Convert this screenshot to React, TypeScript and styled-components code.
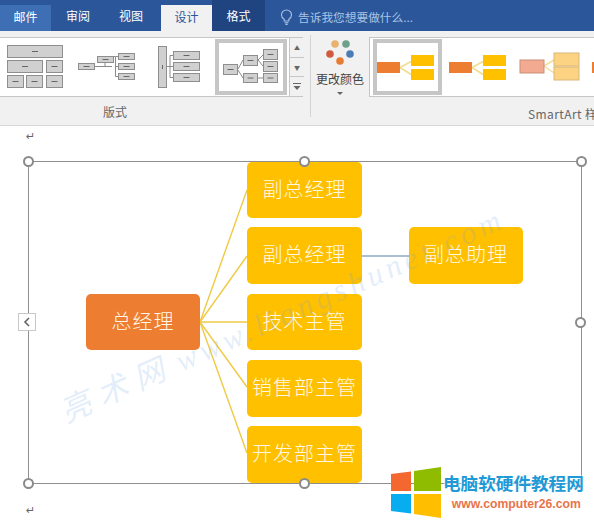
import type { ReactNode } from "react";
import { createGlobalStyle, styled } from "styled-components";

const GlobalStyle = createGlobalStyle`
  html, body {
    margin: 0;
    padding: 0;
    background: #fff;
    overflow: hidden;
  }
  body {
    font-family: "Noto Sans CJK SC", "Liberation Sans", sans-serif;
  }
`;

// the document area starts under the ribbon, diagram numbers below are page coordinates
const DOC_TOP = 126;

const tabs = [
  { label: "邮件", width: 51, kind: "hover" },
  { label: "审阅", width: 54, kind: "plain" },
  { label: "视图", width: 56, kind: "plain" },
  { label: "设计", width: 51, kind: "active" },
  { label: "格式", width: 53, kind: "dark" },
];

const leaves = [
  { label: "副总经理", y: 162, h: 56 },
  { label: "副总经理", y: 227, h: 57 },
  { label: "技术主管", y: 294, h: 56 },
  { label: "销售部主管", y: 360, h: 57 },
  { label: "开发部主管", y: 426, h: 57 },
];

const handles = [
  [28, 161],
  [304, 161],
  [581, 161],
  [580, 322],
  [28, 483],
  [304, 483],
];

const branchEnds = [190, 256, 322, 387, 453];

export default function App() {
  return (
    <Page>
      <GlobalStyle />
      <TabBar>
        {tabs.map((tab) => (
          <Tab key={tab.label} $width={tab.width} $kind={tab.kind}>
            {tab.label}
          </Tab>
        ))}
        <Search>
          <svg width="13" height="18" viewBox="0 0 14 18" fill="none" stroke="#a9c3e6" strokeWidth="1.2">
            <path d="M4.5 11.5C2.8 10.4 1.6 8.800 1.6 6.8a5.4 5.4 0 0 1 10.8 0c0 2-1.2 3.600-2.900 4.700v1.800h-5z" />
            <path d="M5 15.2h4M5.800 17h2.400" />
          </svg>
          <SearchText>告诉我您想要做什么...</SearchText>
        </Search>
      </TabBar>

      <Ribbon>
        <LayoutGroup>
          <Gallery>
            <Thumb x={0} w={70}>
              <Box x={7} y={45} w={56} h={13} />
              <Box x={7} y={60} w={36} h={13} />
              <Box x={46} y={60} w={17} h={13} />
              <Box x={7} y={75} w={17} h={13} />
              <Box x={26} y={75} w={17} h={13} />
              <Box x={46} y={75} w={17} h={13} />
            </Thumb>
            <Thumb x={70} w={75}>
              <path d="M95 66.500h17M105 63v4M114 56.500h1M118 56.500h-2.500v20h2.500M115.500 66.500h2.500" stroke="#8a8a8a" fill="none" />
              <Box x={78} y={63} w={17} h={7} />
              <Box x={97} y={56} w={17} h={7} />
              <Box x={118} y={53} w={17} h={7} />
              <Box x={118} y={63} w={17} h={7} />
              <Box x={118} y={73} w={17} h={7} />
            </Thumb>
            <Thumb x={145} w={70}>
              <path d="M167 66.500h3M170 55.500v22M170 55.500h3M170 66.500h3M170 77.500h3" stroke="#8a8a8a" fill="none" />
              <Box x={158} y={46} w={9} h={42} />
              <Box x={173} y={51} w={27} h={9} />
              <Box x={173} y={62} w={27} h={9} />
              <Box x={173} y={73} w={27} h={9} />
            </Thumb>
            <SelectedThumb $width={72}>
              <Thumb x={219} w={64} y={43} h={48}>
                <path d="M238 69l5-9M238 70l5 8M258 60l5-5M258 60l5 6M258 78h5" stroke="#8a8a8a" fill="none" />
                <Box x={223} y={64} w={15} h={11} />
                <Box x={243} y={55} w={15} h={11} />
                <Box x={243} y={73} w={15} h={10} />
                <Box x={263} y={49} w={15} h={11} />
                <Box x={263} y={61} w={15} h={11} />
                <Box x={263} y={73} w={15} h={10} />
              </Thumb>
            </SelectedThumb>
            <Spinner>
              <SpinButton>▲</SpinButton>
              <SpinButton>▼</SpinButton>
              <SpinButton>
                <svg width="8" height="7" viewBox="0 0 8 7" fill="#666">
                  <rect width="8" height="1" />
                  <path d="M0.500 3h7L4 7z" />
                </svg>
              </SpinButton>
            </Spinner>
          </Gallery>
          <GroupLabel>版式</GroupLabel>
        </LayoutGroup>

        <GroupDivider />

        <StyleGroup>
          <StyleRow>
            <ColorButton>
              <svg width="32" height="28" viewBox="0 0 32 28">
                <circle cx="11" cy="5" r="3.800" fill="#e9b36f" />
                <circle cx="22" cy="5" r="3.800" fill="#6fa08c" />
                <circle cx="6" cy="15" r="3.800" fill="#cf5a3d" />
                <circle cx="26" cy="15" r="3.800" fill="#4a7db5" />
                <circle cx="16" cy="22" r="3.800" fill="#e77c33" />
              </svg>
              <ColorLabel>更改颜色</ColorLabel>
              <Caret />
            </ColorButton>
            <ColorGallery>
              <SelectedThumb $width={69}>
                <Thumb x={377} w={61} y={43} h={48}>
                  <ColorSet />
                </Thumb>
              </SelectedThumb>
              <Thumb x={442} w={74}>
                <ColorSet dx={72} />
              </Thumb>
              <Thumb x={516} w={68}>
                <path d="M544 66l10-6M544 66l10 7" stroke="#f6dc9a" fill="none" strokeWidth="1.500" />
                <rect x={520} y={60} width={24} height={13} fill="#f2ab90" stroke="#c98d78" />
                <rect x={554} y={53} width={25} height={13} fill="#fcd283" stroke="#d9b876" />
                <rect x={554} y={67} width={25} height={13} fill="#fcd283" stroke="#d9b876" />
              </Thumb>
              <Thumb x={584} w={10}>
                <rect x={592} y={62} width={10} height={11} fill="#ed7d31" />
              </Thumb>
            </ColorGallery>
          </StyleRow>
          <StyleLabel>SmartArt 样</StyleLabel>
        </StyleGroup>
      </Ribbon>

      <Document>
        <ReturnMark $y={131}>↵</ReturnMark>
        <ReturnMark $y={505}>↵</ReturnMark>

        <Frame />
        <Connectors viewBox={`0 ${DOC_TOP} 594 397`}>
          {branchEnds.map((end) => (
            <line key={end} x1="200" y1="322" x2="247" y2={end} stroke="#efca45" strokeWidth="1.400" />
          ))}
          <line x1="362" y1="256" x2="409" y2="256" stroke="#8fa8c6" strokeWidth="1.400" />
        </Connectors>

        <Node $x={86} $y={294} $w={114} $h={56} $root>
          总经理
        </Node>
        {leaves.map((leaf, i) => (
          <Node key={i} $x={247} $y={leaf.y} $w={115} $h={leaf.h}>
            {leaf.label}
          </Node>
        ))}
        <Node $x={409} $y={227} $w={114} $h={57}>
          副总助理
        </Node>

        {handles.map(([x, y]) => (
          <Handle key={`${x}-${y}`} $x={x} $y={y} />
        ))}
        <CollapseTab>
          <svg width="8" height="10" viewBox="0 0 8 10" fill="none" stroke="#666" strokeWidth="1.600">
            <path d="M6 1L2 5l4 4" />
          </svg>
        </CollapseTab>

        <Watermark>
          <WatermarkName>亮术网</WatermarkName>www.liangshunet.com
        </Watermark>

        <Badge>
          <svg width="52" height="52" viewBox="0 0 52 52">
            <path d="M1 8l20-2.500v19.500H1z" fill="#f4682f" />
            <path d="M24 5L51 1v24H24z" fill="#8fbc00" />
            <path d="M1 28h20v19.500L1 45z" fill="#08adf0" />
            <path d="M24 28h27v24l-27-4z" fill="#ffbe00" />
          </svg>
          <BadgeText>
            <BadgeTitle>电脑软硬件教程网</BadgeTitle>
            <BadgeUrl>www.computer26.com</BadgeUrl>
          </BadgeText>
        </Badge>
      </Document>
    </Page>
  );
}

function Thumb({
  x,
  w,
  y = 38,
  h = 58,
  children,
}: {
  x: number;
  w: number;
  y?: number;
  h?: number;
  children: ReactNode;
}) {
  return (
    <ThumbSvg width={w} height={h} viewBox={`${x} ${y} ${w} ${h}`}>
      {children}
    </ThumbSvg>
  );
}

function Box({ x, y, w, h }: { x: number; y: number; w: number; h: number }) {
  const midX = x + w / 2;
  const midY = y + h / 2;
  const tall = h > w;
  return (
    <>
      <rect x={x + 0.5} y={y + 0.5} width={w - 1} height={h - 1} fill="#d0d0d0" stroke="#8e8e8e" />
      {tall ? (
        <line x1={midX} y1={midY - 2} x2={midX} y2={midY + 2} stroke="#666" />
      ) : (
        <line x1={midX - 3} y1={midY} x2={midX + 3} y2={midY} stroke="#666" />
      )}
    </>
  );
}

function ColorSet({ dx = 0 }: { dx?: number }) {
  return (
    <>
      <path
        d={`M${400 + dx} 67.500l11-6M${400 + dx} 67.500l11 7`}
        stroke="#f4dc8a"
        fill="none"
        strokeWidth="1.500"
      />
      <rect x={377 + dx} y={62} width={23} height={11} fill="#ed7d31" />
      <rect x={411 + dx} y={55} width={23} height={11} fill="#ffc000" />
      <rect x={411 + dx} y={69} width={23} height={11} fill="#ffc000" />
    </>
  );
}

const Page = styled.div`
  width: 594px;
  height: 523px;
  display: flex;
  flex-direction: column;
  overflow: hidden;
`;

const ThumbSvg = styled.svg`
  flex: none;
  display: block;
`;

const TabBar = styled.div`
  height: 31px;
  flex: none;
  display: flex;
  background: #2b579a;
`;

const tabColors: Record<string, string> = {
  hover: "#3e6fb5",
  plain: "#2b579a",
  active: "#f1f1f1",
  dark: "#1f4480",
};

const Tab = styled.div<{ $width: number; $kind: string }>`
  width: ${(p) => p.$width}px;
  display: flex;
  align-items: center;
  justify-content: center;
  padding-right: ${(p) => (p.$width === 56 ? 4 : 0)}px;
  box-sizing: border-box;
  font-size: 12px;
  color: ${(p) => (p.$kind === "active" ? "#2b579a" : "#fff")};
  background: ${(p) => tabColors[p.$kind]};
  border-top: ${(p) => (p.$kind === "active" || p.$kind === "hover" ? "5px solid #2b579a" : "none")};
  padding-bottom: ${(p) => (p.$kind === "active" || p.$kind === "hover" ? 3 : 0)}px;
`;

const Search = styled.div`
  display: flex;
  align-items: center;
  gap: 5px;
  padding: 2px 0 0 15px;
`;

const SearchText = styled.span`
  font-size: 11.700px;
  color: #a9c3e6;
`;

const Ribbon = styled.div`
  height: 95px;
  box-sizing: border-box;
  flex: none;
  display: flex;
  background: #f1f1f1;
  border-bottom: 1px solid #d8d8d8;
`;

const LayoutGroup = styled.div`
  width: 303px;
  flex: none;
  display: flex;
  flex-direction: column;
  padding-top: 6px;
  box-sizing: border-box;
`;

const Gallery = styled.div`
  height: 60px;
  box-sizing: border-box;
  display: flex;
  background: #fff;
  border: 1px solid #c6c6c6;
  border-left: none;
`;

const SelectedThumb = styled.div<{ $width: number }>`
  width: ${(p) => p.$width}px;
  height: 56px;
  margin-top: 1px;
  flex: none;
  box-sizing: border-box;
  border: 4px solid #c6c6c6;
  background: #fff;
`;

const Spinner = styled.div`
  margin-left: 2px;
  width: 14px;
  flex: none;
  display: flex;
  flex-direction: column;
  background: #f1f1f1;
  border-left: 1px solid #c6c6c6;
`;

const SpinButton = styled.div`
  flex: 1;
  display: flex;
  align-items: center;
  justify-content: center;
  font-size: 6px;
  color: #666;
  border-bottom: 1px solid #c6c6c6;

  &:last-child {
    border-bottom: none;
  }
`;

const GroupLabel = styled.div`
  flex: 1;
  display: flex;
  align-items: center;
  justify-content: center;
  padding-right: 73px;
  font-size: 12px;
  color: #666;
`;

const GroupDivider = styled.div`
  width: 1px;
  height: 82px;
  margin: 4px 0 0 7px;
  flex: none;
  background: #d4d4d4;
`;

const StyleGroup = styled.div`
  flex: 1;
  min-width: 0;
  display: flex;
  flex-direction: column;
  padding-top: 6px;
`;

const StyleRow = styled.div`
  height: 60px;
  display: flex;
`;

const ColorButton = styled.div`
  width: 58px;
  flex: none;
  display: flex;
  flex-direction: column;
  align-items: center;
  padding-top: 2px;
  box-sizing: border-box;
`;

const ColorLabel = styled.span`
  margin-top: 4px;
  font-size: 12px;
  line-height: 16px;
  color: #444;
  white-space: nowrap;
`;

const Caret = styled.span`
  margin-top: 5px;
  width: 0;
  height: 0;
  border-left: 3px solid transparent;
  border-right: 3px solid transparent;
  border-top: 3px solid #666;
`;

const ColorGallery = styled.div`
  flex: 1;
  min-width: 0;
  height: 60px;
  box-sizing: border-box;
  display: flex;
  overflow: hidden;
  background: #fff;
  border: 1px solid #c6c6c6;
  border-right: none;
  padding-left: 3px;
`;

const StyleLabel = styled.div`
  flex: 1;
  padding: 9px 0 0 217px;
  font-size: 12px;
  line-height: 16px;
  color: #666;
  white-space: nowrap;
  letter-spacing: 0.400px;
`;

const Document = styled.div`
  flex: 1;
  position: relative;
  background: #fff;
  overflow: hidden;
`;

const ReturnMark = styled.span<{ $y: number }>`
  position: absolute;
  left: 26px;
  top: ${(p) => p.$y - DOC_TOP}px;
  font-family: "DejaVu Sans", sans-serif;
  font-size: 11px;
  line-height: 12px;
  color: #666;
`;

const Frame = styled.div`
  position: absolute;
  left: 28px;
  top: ${161 - DOC_TOP}px;
  width: 552px;
  height: 321px;
  border: 1px solid #8f8f8f;
`;

const Connectors = styled.svg`
  position: absolute;
  left: 0;
  top: 0;
  width: 594px;
  height: 397px;
`;

const Node = styled.div<{ $x: number; $y: number; $w: number; $h: number; $root?: boolean }>`
  position: absolute;
  left: ${(p) => p.$x}px;
  top: ${(p) => p.$y - DOC_TOP}px;
  width: ${(p) => p.$w}px;
  height: ${(p) => p.$h}px;
  box-sizing: border-box;
  padding-bottom: 4px;
  display: flex;
  align-items: center;
  justify-content: center;
  border-radius: 5px;
  background: ${(p) => (p.$root ? "#ed7d31" : "#ffc000")};
  color: #fff8e6;
  font-size: 20px;
  font-weight: 300;
  letter-spacing: 1px;
  white-space: nowrap;
`;

const Handle = styled.span<{ $x: number; $y: number }>`
  position: absolute;
  left: ${(p) => p.$x - 5.5}px;
  top: ${(p) => p.$y - 5.5 - DOC_TOP}px;
  width: 11px;
  height: 11px;
  box-sizing: border-box;
  border: 2px solid #8a8a8a;
  border-radius: 50%;
  background: #fff;
`;

const CollapseTab = styled.div`
  position: absolute;
  left: 18px;
  top: ${313 - DOC_TOP}px;
  width: 18px;
  height: 18px;
  box-sizing: border-box;
  display: flex;
  align-items: center;
  justify-content: center;
  background: #fff;
  border: 1px solid #c8c8c8;
`;

const Watermark = styled.div`
  position: absolute;
  left: 62px;
  top: ${394 - DOC_TOP}px;
  font-family: "Liberation Serif", "Noto Sans CJK SC", serif;
  font-style: italic;
  font-size: 31px;
  line-height: 40px;
  letter-spacing: 4.500px;
  white-space: nowrap;
  color: rgba(110, 165, 230, 0.2);
  transform: rotate(-24deg);
  transform-origin: left center;
`;

const WatermarkName = styled.span`
  letter-spacing: 9px;
  margin-right: 6px;
`;

const Badge = styled.div`
  position: absolute;
  left: 390px;
  top: ${466 - DOC_TOP}px;
  display: flex;
  gap: 1px;
`;

const BadgeText = styled.div`
  display: flex;
  flex-direction: column;
  align-items: flex-end;
  padding-top: 7px;
`;

const BadgeTitle = styled.div`
  font-size: 17.600px;
  line-height: 20px;
  font-weight: 700;
  color: #1f9ad6;
  white-space: nowrap;
  text-shadow: 0 0 2px #fff, 0 0 2px #fff;
`;

const BadgeUrl = styled.div`
  margin-top: 3px;
  font-family: "Liberation Sans", sans-serif;
  font-size: 12.200px;
  line-height: 16px;
  font-weight: 700;
  color: #e8744a;
  white-space: nowrap;
  padding-right: 3px;
`;
